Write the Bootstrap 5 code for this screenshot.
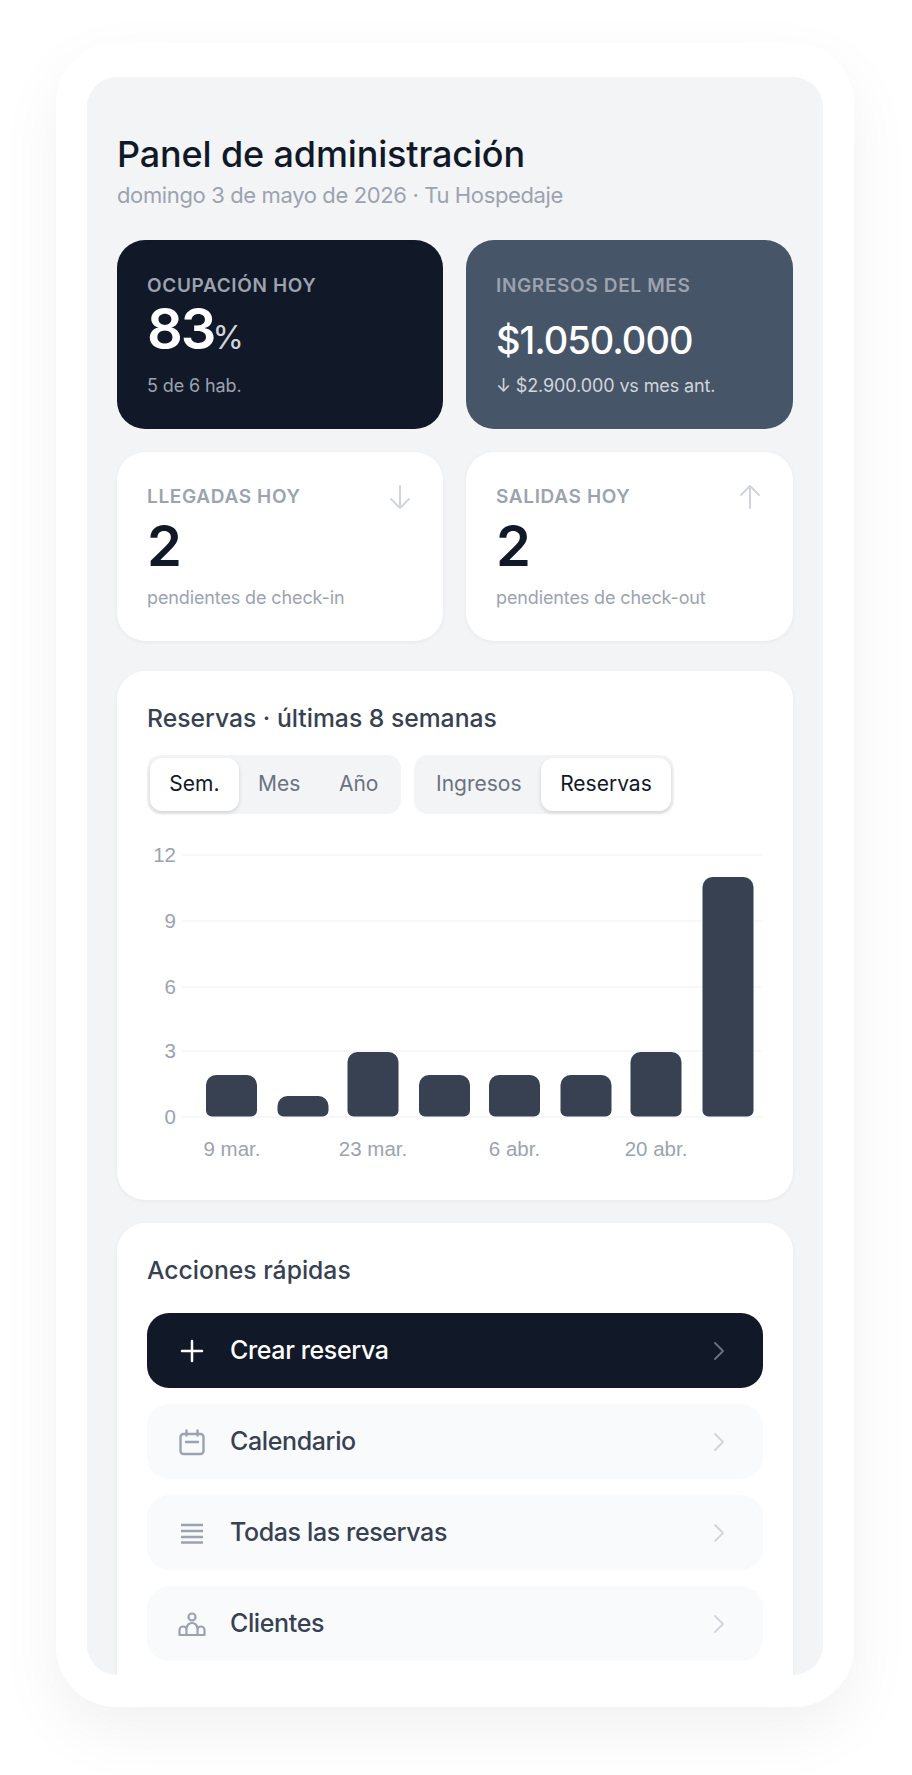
<!DOCTYPE html>
<html lang="es">
<head>
  <meta charset="utf-8">
  <title>Panel de administración</title>
  <link href="https://cdn.jsdelivr.net/npm/bootstrap@5.3.0/dist/css/bootstrap.min.css" rel="stylesheet">
  <style>
    body { background: #fff; font-family: Inter, "Noto Sans", sans-serif; height: 1775px; overflow: hidden; padding: 43px 0 0 56px; }
    .phone-frame { width: 798px; height: 1664px; padding: 34px 31px 32px; background: #fff; border-radius: 60px; box-shadow: 0 24px 64px rgba(0,0,0,.06); }
    .phone-screen { height: 1598px; padding: 53px 30px 0; background: #f3f4f6; border-radius: 30px; overflow: hidden; }
    .page-title { font-size: 36px; line-height: 48px; font-weight: 500; color: #111827; letter-spacing: -.15px; margin: 0; }
    .page-sub { font-size: 22px; line-height: 30px; color: #9ca3af; letter-spacing: -.37px; margin: 1.5px 0 30.5px; }
    .stat-grid { display: grid; grid-template-columns: 326px 327px; column-gap: 23px; row-gap: 23px; }
    .stat-box { height: 189px; padding: 35.5px 30px 0; border-radius: 28px; border: 0; }
    .stat-dark { background: #111827; color: #fff; }
    .stat-slate { background: #475569; color: #fff; }
    .stat-white { background: #fff; box-shadow: 0 1px 4px rgba(0,0,0,.05); padding-top: 34.5px; }
    .stat-label { font-size: 19px; line-height: 20px; font-weight: 600; letter-spacing: .65px; color: #9ca3af; text-transform: uppercase; }
    .stat-value { font-size: 56px; line-height: 64px; font-weight: 600; letter-spacing: -2px; color: #111827; }
    .stat-white .stat-value { margin-top: 4.5px; }
    .stat-dark .stat-value { color: #fff; margin-top: 1.5px; }
    .stat-value small { font-size: 32px; font-weight: 400; color: #d1d5db; letter-spacing: 0; margin-left: -2px; }
    .stat-money { font-size: 38px; line-height: 64px; font-weight: 500; letter-spacing: -1px; padding-top: 12px; }
    .stat-note { font-size: 18px; line-height: 22px; letter-spacing: -.12px; color: #9ca3af; margin-top: 8.5px; }
    .stat-dark .stat-note { margin-top: 4.5px; }
    .stat-slate .stat-note { color: #d1d5db; margin-top: 3.7px; }
    .arrow-icon { margin: -3px 2px 0 0; }
    .white-card { background: #fff; border: 0; border-radius: 28px; box-shadow: 0 1px 4px rgba(0,0,0,.05); padding: 30px; }
    .chart-card { height: 529px; margin-top: 30px; padding-bottom: 0; }
    .actions-card { height: 600px; margin-top: 23px; }
    .card-heading { font-size: 24.7px; line-height: 34px; font-weight: 500; color: #374151; margin: 0; }
    .seg-bar { margin-top: 19.5px; gap: 13px; }
    .seg-group { background: #f3f4f6; border-radius: 14px; padding: 3px; height: 59px; }
    .seg-item { height: 53px; padding: 0 19.3px; border: 0; border-radius: 12px; background: transparent; color: #6b7280; font-size: 21px; line-height: 1.2; }
    .seg-item.on { background: #fff; color: #111827; box-shadow: 0 2px 4px rgba(0,0,0,.14); }
    .chart-svg { display: block; width: 616px; height: 330px; margin-top: 31.5px; }
    .chart-svg text { font-family: "Liberation Sans", sans-serif; font-size: 20.5px; fill: #9ca3af; }
    .action-title { margin-bottom: 26px; }
    .action-row { height: 75px; padding: 0 38px 0 31px; border: 0; border-radius: 22px; background: #f9fafb; color: #374151; font-size: 25px; font-weight: 500; letter-spacing: -.38px; }
    .action-row.main { background: #111827; color: #fff; }
    .action-icon { width: 28px; height: 28px; margin-right: 24px; flex: none; }
  </style>
</head>
<body>
  <div class="phone-frame">
    <div class="phone-screen">
      <h1 class="page-title">Panel de administración</h1>
      <p class="page-sub">domingo 3 de mayo de 2026 · Tu Hospedaje</p>

      <!-- stats -->
      <div class="stat-grid">
        <div class="stat-box stat-dark">
          <div class="stat-label">Ocupación hoy</div>
          <div class="stat-value">83<small>%</small></div>
          <div class="stat-note">5 de 6 hab.</div>
        </div>
        <div class="stat-box stat-slate">
          <div class="stat-label">Ingresos del mes</div>
          <div class="stat-money">$1.050.000</div>
          <div class="stat-note">↓ $2.900.000 vs mes ant.</div>
        </div>
        <div class="stat-box stat-white">
          <div class="d-flex justify-content-between">
            <div class="stat-label">Llegadas hoy</div>
            <svg class="arrow-icon" width="22" height="26" viewBox="0 0 22 26" fill="none" stroke="#d1d5db" stroke-width="2" stroke-linecap="round" stroke-linejoin="round"><path d="M11 2v22M2 15l9 9 9-9"/></svg>
          </div>
          <div class="stat-value">2</div>
          <div class="stat-note">pendientes de check-in</div>
        </div>
        <div class="stat-box stat-white">
          <div class="d-flex justify-content-between">
            <div class="stat-label">Salidas hoy</div>
            <svg class="arrow-icon" width="22" height="26" viewBox="0 0 22 26" fill="none" stroke="#d1d5db" stroke-width="2" stroke-linecap="round" stroke-linejoin="round"><path d="M11 24V2M2 11l9-9 9 9"/></svg>
          </div>
          <div class="stat-value">2</div>
          <div class="stat-note">pendientes de check-out</div>
        </div>
      </div>

      <!-- chart -->
      <div class="white-card chart-card">
        <h2 class="card-heading">Reservas · últimas 8 semanas</h2>
        <div class="d-flex seg-bar">
          <div class="seg-group d-flex">
            <button class="seg-item on">Sem.</button>
            <button class="seg-item">Mes</button>
            <button class="seg-item">Año</button>
          </div>
          <div class="seg-group d-flex">
            <button class="seg-item">Ingresos</button>
            <button class="seg-item on">Reservas</button>
          </div>
        </div>
        <svg class="chart-svg" viewBox="147 845 616 330"></svg>
      </div>

      <!-- actions -->
      <div class="white-card actions-card">
        <h2 class="card-heading action-title">Acciones rápidas</h2>
        <div class="d-flex flex-column gap-3">
          <a class="action-row main d-flex align-items-center text-decoration-none">
            <svg class="action-icon" viewBox="0 0 28 28" fill="none" stroke="#fff" stroke-width="2.5" stroke-linecap="round"><path d="M14 4v20M4 14h20"/></svg>
            <span class="flex-grow-1">Crear reserva</span>
            <svg width="12" height="20" viewBox="0 0 12 20" fill="none" stroke="#6b7280" stroke-width="1.8" stroke-linecap="round" stroke-linejoin="round"><path d="M2 2l8 8-8 8"/></svg>
          </a>
          <a class="action-row d-flex align-items-center text-decoration-none">
            <svg class="action-icon" viewBox="0 0 28 28" fill="none" stroke="#9ca3af" stroke-width="2.4" stroke-linecap="round" stroke-linejoin="round"><rect x="2.500" y="6" width="23" height="20" rx="3"/><path d="M8.500 2.500v5M19.500 2.500v5M8 14h12"/></svg>
            <span class="flex-grow-1">Calendario</span>
            <svg width="12" height="20" viewBox="0 0 12 20" fill="none" stroke="#d1d5db" stroke-width="1.8" stroke-linecap="round" stroke-linejoin="round"><path d="M2 2l8 8-8 8"/></svg>
          </a>
          <a class="action-row d-flex align-items-center text-decoration-none">
            <svg class="action-icon" viewBox="0 0 28 28" fill="none" stroke="#9ca3af" stroke-width="2.500"><path d="M3 6h22M3 12h22M3 18h22M3 23.500h22"/></svg>
            <span class="flex-grow-1">Todas las reservas</span>
            <svg width="12" height="20" viewBox="0 0 12 20" fill="none" stroke="#d1d5db" stroke-width="1.8" stroke-linecap="round" stroke-linejoin="round"><path d="M2 2l8 8-8 8"/></svg>
          </a>
          <a class="action-row d-flex align-items-center text-decoration-none">
            <svg class="action-icon" viewBox="0 0 28 28" fill="none" stroke="#9ca3af" stroke-width="2.2" stroke-linecap="round" stroke-linejoin="round"><circle cx="14" cy="7" r="3.500"/><path d="M8.500 25v-6.500a5.500 5.500 0 0 1 11 0V25M1.500 25h25M1.500 25v-5a3.500 3.500 0 0 1 7 0M26.500 25v-5a3.500 3.500 0 0 0-7 0"/></svg>
            <span class="flex-grow-1">Clientes</span>
            <svg width="12" height="20" viewBox="0 0 12 20" fill="none" stroke="#d1d5db" stroke-width="1.8" stroke-linecap="round" stroke-linejoin="round"><path d="M2 2l8 8-8 8"/></svg>
          </a>
        </div>
      </div>
    </div>
  </div>

  <script>
    // chart data, coordinates are page pixels (see viewBox)
    var svg = document.querySelector('.chart-svg');
    var html = '';
    [[12, 855], [9, 921], [6, 987], [3, 1051], [0, 1117]].forEach(function (t) {
      html += '<line x1="182" x2="763" y1="' + t[1] + '" y2="' + t[1] + '" stroke="#f3f4f6" stroke-width="1.500"/>';
      html += '<text x="176" y="' + (t[1] + 7) + '" text-anchor="end">' + t[0] + '</text>';
    });
    var bars = [[206, 1075], [277.500, 1096], [347.500, 1052], [419, 1075], [489, 1075], [560.500, 1075], [630.500, 1052], [702.500, 877]];
    bars.forEach(function (b) {
      var y = b[1], h = 1116.500 - y, r = Math.min(10, h / 2), s = Math.min(6, h / 2);
      html += '<path fill="#374151" d="M' + b[0] + ' ' + (y + r) + 'a' + r + ' ' + r + ' 0 0 1 ' + r + ' -' + r + 'h' + (51 - 2 * r) + 'a' + r + ' ' + r + ' 0 0 1 ' + r + ' ' + r + 'v' + (h - r - s) + 'a' + s + ' ' + s + ' 0 0 1 -' + s + ' ' + s + 'h' + (-(51 - 2 * s)) + 'a' + s + ' ' + s + ' 0 0 1 -' + s + ' -' + s + 'z"/>';
    });
    [['9 mar.', 232], ['23 mar.', 373], ['6 abr.', 514.500], ['20 abr.', 656]].forEach(function (l) {
      html += '<text x="' + l[1] + '" y="1156" text-anchor="middle">' + l[0] + '</text>';
    });
    svg.innerHTML = html;
  </script>
  <script src="https://cdn.jsdelivr.net/npm/bootstrap@5.3.0/dist/js/bootstrap.bundle.min.js"></script>
</body>
</html>
